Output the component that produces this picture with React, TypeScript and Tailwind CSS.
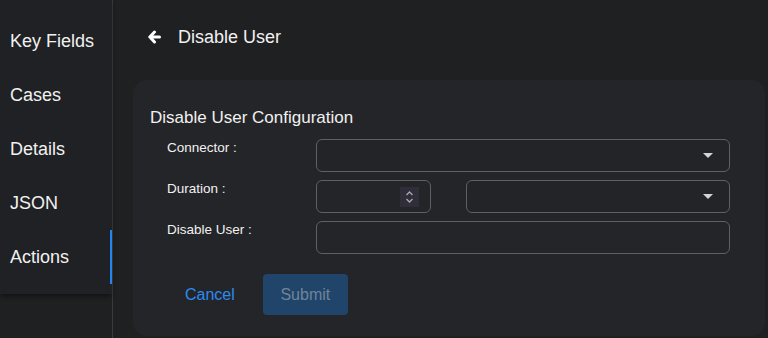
const navItems = ["Key Fields", "Cases", "Details", "JSON", "Actions"];

function Caret() {
  return (
    <svg width="10" height="6" viewBox="0 0 10 6" className="absolute right-[16px] top-1/2 -translate-y-1/2">
      <path d="M0 0 L10 0 L5 5 Z" fill="#d4d4d6" />
    </svg>
  );
}

function SelectBox({ className = "" }: { className?: string }) {
  return (
    <div className={`relative h-[33px] rounded-[6px] border border-[#5f6062] bg-[#232427] ${className}`}>
      <Caret />
    </div>
  );
}

export default function App() {
  return (
    <div
      className="flex h-[338px] w-[768px] overflow-hidden bg-[#1f2022] text-[#f1f1f1]"
      style={{ fontFamily: '"Liberation Sans", Arial, sans-serif' }}
    >
      {/* Sidebar */}
      <aside className="w-[113px] shrink-0 border-r border-[#3a3b3e]">
        <nav className="bg-[#202124] pt-[14px] pb-[10px] shadow-[0_3px_4px_rgba(0,0,0,0.35)]">
          {navItems.map((item) => (
            <div
              key={item}
              className={`flex h-[54px] items-center pl-[10px] pt-[1px] text-[18px] ${
                item === "Actions" ? "border-r-2 border-[#2186f2]" : ""
              }`}
            >
              {item}
            </div>
          ))}
        </nav>
      </aside>

      {/* Main */}
      <main className="flex min-w-0 flex-1 flex-col">
        <header className="flex h-[80px] shrink-0 items-center pl-[35px] pb-[6px]">
          <svg width="13" height="14" viewBox="0 0 13 14">
            <path
              d="M6.5 2 L1.8 7 L6.5 12 M2 7 H11.5"
              stroke="#ffffff"
              strokeWidth="3"
              strokeLinecap="round"
              strokeLinejoin="round"
              fill="none"
            />
          </svg>
          <h1 className="ml-[17px] text-[18px]">Disable User</h1>
        </header>

        <section className="ml-[20px] mr-[3px] h-[256px] rounded-[14px] bg-[#242528] pl-[17px] pr-[35px] pt-[28px]">
          <h2 className="text-[17px] leading-[20px]">Disable User Configuration</h2>

          <div className="mt-[11px] flex flex-col gap-[8px] pl-[17px] text-[13.5px] leading-[18px]">
            <div className="flex">
              <label className="w-[149px] shrink-0">Connector :</label>
              <SelectBox className="flex-1" />
            </div>

            <div className="flex">
              <label className="w-[149px] shrink-0">Duration :</label>
              <div className="relative h-[33px] w-[115px] shrink-0 rounded-[6px] border border-[#5f6062]">
                <div className="absolute right-[11px] top-[6px] flex h-[20px] w-[19px] items-center justify-center bg-[#2f2e39]">
                  <svg width="9" height="14" viewBox="0 0 9 14">
                    <path d="M1.5 5 L4.5 2 L7.5 5 M1.5 9 L4.5 12 L7.5 9" stroke="#a8a6b2" strokeWidth="1.4" fill="none" />
                  </svg>
                </div>
              </div>
              <SelectBox className="ml-[35px] flex-1" />
            </div>

            <div className="flex">
              <label className="w-[149px] shrink-0">Disable User :</label>
              <div className="h-[33px] flex-1 rounded-[6px] border border-[#5f6062]" />
            </div>
          </div>

          <div className="mt-[20px] flex items-center gap-[10px] pl-[17px]">
            <button className="h-[41px] px-[18px] text-[16px] text-[#2a8cf2]">Cancel</button>
            <button className="h-[41px] w-[85px] rounded-[4px] bg-[#21446a] text-[16px] text-[#6f849b]">
              Submit
            </button>
          </div>
        </section>
      </main>
    </div>
  );
}
